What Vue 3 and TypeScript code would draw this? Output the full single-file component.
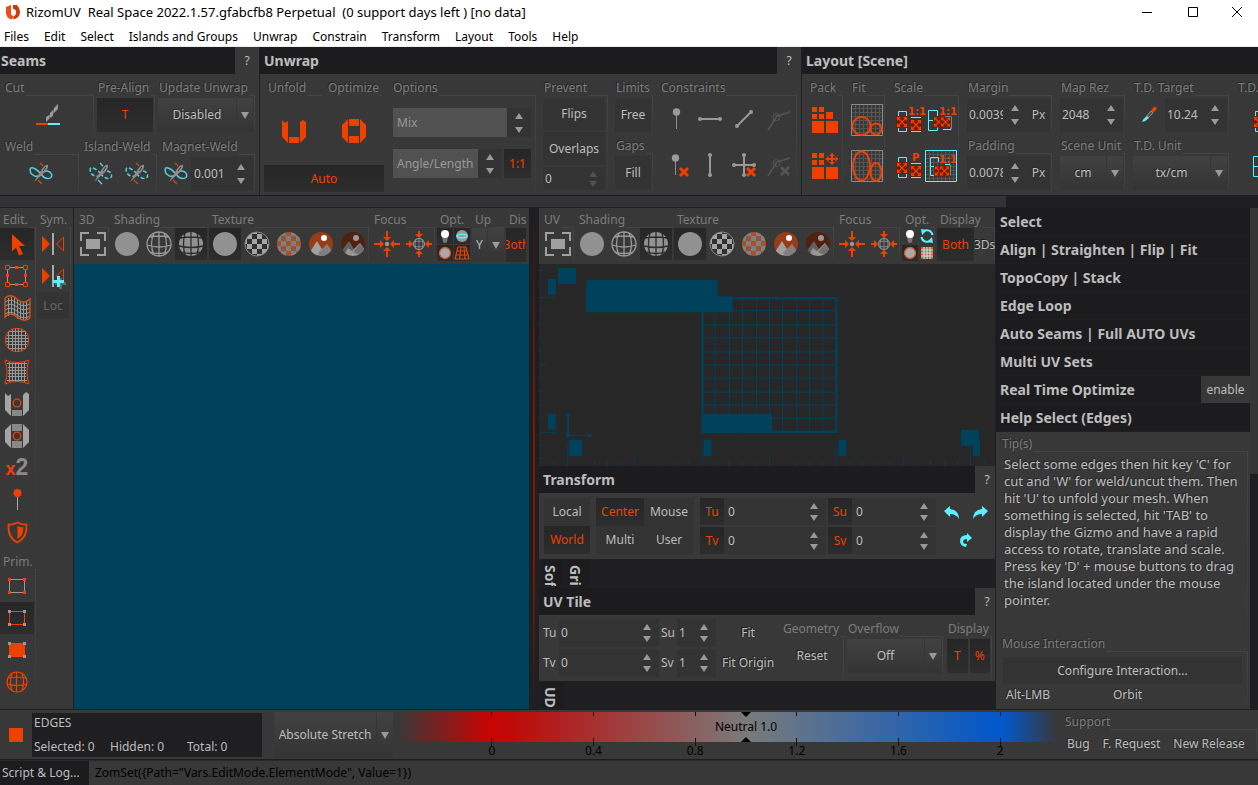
<script setup lang="ts">
import { ref } from 'vue'

interface Tool { icon: string; label: string; active?: boolean }

const menus = ['Files', 'Edit', 'Select', 'Islands and Groups', 'Unwrap', 'Constrain', 'Transform', 'Layout', 'Tools', 'Help']

const constraints: Tool[] = [
  { icon: 'pin', label: 'Pin' },
  { icon: 'horiz', label: 'Horizontal' },
  { icon: 'diag', label: 'Along line' },
  { icon: 'angle', label: 'Angle' },
  { icon: 'pin-x', label: 'Unpin' },
  { icon: 'vert', label: 'Vertical' },
  { icon: 'cross-x', label: 'Remove constraints' },
  { icon: 'angle-x', label: 'Remove angle' },
]

const editTools: Tool[] = [
  { icon: 'arrow', label: 'Select', active: true },
  { icon: 'box', label: 'Transform box' },
  { icon: 'flag', label: 'Deform' },
  { icon: 'bulge', label: 'Inflate' },
  { icon: 'pinch', label: 'Pinch' },
  { icon: 'brush-u', label: 'Unfold brush' },
  { icon: 'brush-o', label: 'Optimize brush' },
  { icon: 'x2', label: 'Double' },
  { icon: 'redpin', label: 'Pin brush' },
  { icon: 'shield', label: 'Protect' },
]

const primTools: Tool[] = [
  { icon: 'verts', label: 'Vertices' },
  { icon: 'edges', label: 'Edges', active: true },
  { icon: 'polys', label: 'Polygons' },
  { icon: 'isle', label: 'Islands' },
]

const shading: Tool[] = [
  { icon: 'ball', label: 'Flat' },
  { icon: 'wire', label: 'Wireframe' },
  { icon: 'wireball', label: 'Shaded wireframe', active: true },
]

const texture: Tool[] = [
  { icon: 'ball', label: 'No texture', active: true },
  { icon: 'checker', label: 'Checker' },
  { icon: 'checker2', label: 'Color checker' },
  { icon: 'photo', label: 'Image' },
  { icon: 'photo2', label: 'Dark image' },
]

const focus: Tool[] = [
  { icon: 'focus', label: 'Focus selection' },
  { icon: 'focus-globe', label: 'Focus all' },
]

const views = [
  {
    id: '3D',
    opts: [
      { icon: 'bulb', label: 'Light', active: true },
      { icon: 'ring', label: 'Ring', active: true },
      { icon: 'dot', label: 'Outline', active: true },
      { icon: 'floor', label: 'Floor', active: true },
    ] as Tool[],
  },
  {
    id: 'UV',
    opts: [
      { icon: 'bulb', label: 'Light' },
      { icon: 'sync', label: 'Sync' },
      { icon: 'dot', label: 'Outline', active: true },
      { icon: 'gridc', label: 'Grid' },
    ] as Tool[],
  },
]

const sections = ['Select', 'Align | Straighten | Flip | Fit', 'TopoCopy | Stack', 'Edge Loop', 'Auto Seams | Full AUTO UVs', 'Multi UV Sets']
const scale = ['0', '0.4', '0.8', '1.2', '1.6', '2']

const magnet = ref('0.001')
const mix = ref('Mix')
const angle = ref('Angle/Length')
const overlaps = ref('0')
const margin = ref('0.0039')
const padding = ref('0.0078')
const rez = ref('2048')
const target = ref('10.24')
const tu = ref('0')
const tv = ref('0')
const su = ref('0')
const sv = ref('0')
const tileTu = ref('0')
const tileTv = ref('0')
const tileSu = ref('1')
const tileSv = ref('1')

const step = 40.15 / 3
const gridPos = Array.from({ length: 11 }, (_, i) => Math.round(i * step))
const sideTicks = Array.from({ length: 15 }, (_, i) => ({ p: Math.round(7 + i * step), len: i % 10 === 2 ? 20 : i % 10 === 7 ? 10 : 5 }))
const baseTicks = Array.from({ length: 34 }, (_, i) => ({ p: Math.round(3 + i * step), len: i % 10 === 2 ? 20 : i % 10 === 7 ? 10 : 5 }))
</script>

<template>
  <svg class="defs" width="0" height="0" aria-hidden="true">
    <defs>
      <clipPath id="disc"><circle cx="16" cy="16" r="12" /></clipPath>
      <pattern id="chk" width="10" height="10" patternUnits="userSpaceOnUse" x="1" y="1">
        <rect width="10" height="10" fill="#303030" /><path d="M0 0h5v5h-5zM5 5h5v5h-5z" fill="#a4a4a4" />
      </pattern>
      <pattern id="chk2" width="10" height="10" patternUnits="userSpaceOnUse" x="3" y="3">
        <rect width="10" height="10" fill="#808080" /><path d="M0 0h5v5h-5z" fill="#a85028" /><path d="M5 5h5v5h-5z" fill="#94543a" />
      </pattern>
      <pattern id="mesh" width="4" height="4" patternUnits="userSpaceOnUse">
        <path d="M0 .5h4M.5 0v4" stroke="#555" stroke-width="1" />
      </pattern>
    </defs>
    <symbol id="i-logo" viewBox="0 0 16 16">
      <path d="M1 3l5-2v8q0 3 3 3l-2 3.500Q1 14 1 9z" fill="#f04a18" />
      <path d="M8 1h4q3 3 3 7 0 6-7 7.500l1-3.500q2-.5 2-4 0-3-3-3z" fill="#c83a10" />
    </symbol>
    <symbol id="i-cut" viewBox="0 0 24 22">
      <path d="M10 18v-5l3-2v4zM14 14V9l3-3v6zM18 9V4l4-4v5z" fill="#9a9a9a" />
      <path d="M13 15v-4l1-1v4zM17 10V6l1-1v4z" fill="#777" />
      <path d="M0 19h12v2H0z" fill="#f04000" /><path d="M12 19h12v2H12z" fill="#5cf0ff" />
    </symbol>
    <symbol id="i-weld" viewBox="0 0 24 24">
      <path d="M11 1l3 3M9 18l4 4" stroke="#d04010" stroke-width="1.500" />
      <path d="M12 12C8 7 2 4 1.200 7 .5 13 8 17 12 12 16 7 21 9 22.500 12 24 18 16 18 12 12" fill="none" stroke="#4fd0dc" stroke-width="1.500" />
      <path d="M5 20L13 7q4-5 6-4 1 3-4 8z" fill="#8c8c8c" /><path d="M14 9l3-4" stroke="#333" />
    </symbol>
    <symbol id="i-weld2" viewBox="0 0 24 24">
      <path d="M11 1l3 3M9 18l4 4" stroke="#4fd0dc" stroke-width="1.500" />
      <path d="M12 12C8 7 2 4 1.200 7 .5 13 8 17 12 12 16 7 21 9 22.500 12 24 18 16 18 12 12" fill="none" stroke="#4fd0dc" stroke-width="1.500" stroke-dasharray="4 2" />
      <path d="M5 20L13 7q4-5 6-4 1 3-4 8z" fill="#8c8c8c" /><path d="M14 9l3-4" stroke="#333" />
    </symbol>
    <symbol id="i-weld3" viewBox="0 0 24 24">
      <path d="M11 1l3 3M9 18l4 4" stroke="#d04010" stroke-width="1.500" />
      <path d="M12 12C8 7 2 4 1.200 7 .5 13 8 17 12 12 16 7 21 9 22.500 12 24 18 16 18 12 12" fill="none" stroke="#4fd0dc" stroke-width="1.500" stroke-dasharray="4 2" />
      <path d="M5 20L13 7q4-5 6-4 1 3-4 8z" fill="#8c8c8c" /><path d="M14 9l3-4" stroke="#333" />
    </symbol>
    <symbol id="i-u" viewBox="0 0 24 24">
      <path d="M0 1l3 3 3-2v22l-6-6zM7 18h10v6H7zM18 3l3-2 3 2v15l-6 6z" fill="currentColor" />
    </symbol>
    <symbol id="i-o" viewBox="0 0 24 24">
      <path d="M0 6l6-6v24l-6-6zM7 0h10v7H7zM7 17h10v7H7zM18 0l6 6v12l-6 6z" fill="currentColor" />
    </symbol>
    <symbol id="i-pin" viewBox="0 0 28 28"><path d="M13.500 8v16" stroke="#8f8f8f" /><circle cx="13.500" cy="7" r="3.700" fill="#9a9a9a" /></symbol>
    <symbol id="i-horiz" viewBox="0 0 28 28"><path d="M3 14h20" stroke="#999" stroke-width="2" /><circle cx="3" cy="14" r="2" fill="#999" /><circle cx="23" cy="14" r="2" fill="#999" /></symbol>
    <symbol id="i-diag" viewBox="0 0 28 28"><path d="M6 21L20 7" stroke="#999" stroke-width="2" /><circle cx="6" cy="21" r="2" fill="#999" /><circle cx="20" cy="7" r="2" fill="#999" /></symbol>
    <symbol id="i-angle" viewBox="0 0 28 28"><path d="M3 25l9-14 13-4" fill="none" stroke="#555" stroke-width="1.500" /><circle cx="11.500" cy="12" r="3.500" fill="none" stroke="#555" /></symbol>
    <symbol id="i-pin-x" viewBox="0 0 28 28"><path d="M12.500 8v16" stroke="#8f8f8f" /><circle cx="12.500" cy="7" r="3.700" fill="#9a9a9a" /><path d="M17 17l8 8M25 17l-8 8" stroke="#f04000" stroke-width="3" /></symbol>
    <symbol id="i-vert" viewBox="0 0 28 28"><path d="M13 4v20" stroke="#999" stroke-width="2" /><circle cx="13" cy="4" r="2" fill="#999" /><circle cx="13" cy="24" r="2" fill="#999" /></symbol>
    <symbol id="i-cross-x" viewBox="0 0 28 28"><path d="M13 4v20M3 14h20" stroke="#999" stroke-width="2" /><circle cx="13" cy="4" r="2" fill="#999" /><circle cx="13" cy="24" r="2" fill="#999" /><circle cx="3" cy="14" r="2" fill="#999" /><circle cx="23" cy="14" r="2" fill="#999" /><path d="M16 17l8 8M24 17l-8 8" stroke="#f04000" stroke-width="3" /></symbol>
    <symbol id="i-angle-x" viewBox="0 0 28 28"><path d="M3 25l9-14 13-4" fill="none" stroke="#555" stroke-width="1.500" /><circle cx="11.500" cy="12" r="3.500" fill="none" stroke="#555" /><path d="M16 16l8 8M24 16l-8 8" stroke="#555" stroke-width="2.500" /></symbol>
    <symbol id="i-pack" viewBox="0 0 26 26"><path d="M0 0h5v5H0zM7 0h5v5H7zM0 7h5v5H0zM7 7h5v5H7zM14 5h7v7h-7zM0 14h12v12H0zM14 14h12v12H14z" fill="#f04000" /></symbol>
    <symbol id="i-pack2" viewBox="0 0 26 26"><path d="M0 0h5v5H0zM7 0h5v5H7zM0 7h5v5H0zM7 7h5v5H7zM0 14h12v12H0zM14 14h12v12H14zM20 0l3 3h-6zM20 12l-3-3h6zM13.500 6l3-3v6zM26.500 6l-3-3v6zM19 2h2v8h-2zM16 5h8v2h-8z" fill="#f04000" /></symbol>
    <symbol id="i-fit" viewBox="0 0 32 32"><path d="M.5.5h31v31H.5z" fill="url(#mesh)" stroke="#8a8a8a" /><circle cx="10.500" cy="22" r="9" fill="none" stroke="#f04000" stroke-width="2" /><circle cx="25" cy="25" r="5.500" fill="none" stroke="#f04000" stroke-width="2" /></symbol>
    <symbol id="i-fit2" viewBox="0 0 32 32"><path d="M.5.5h31v31H.5z" fill="url(#mesh)" stroke="#8a8a8a" /><ellipse cx="10.500" cy="16" rx="8.500" ry="14.500" fill="none" stroke="#f04000" stroke-width="2" /><ellipse cx="25" cy="22" rx="5.500" ry="9" fill="none" stroke="#f04000" stroke-width="2" /></symbol>
    <symbol id="xa" viewBox="0 0 12 12"><path d="M0 0h12v12H0z" fill="#701c08" /><path d="M2 2l8 8M10 2l-8 8" stroke="#f04000" stroke-width="1.300" /><path d="M1 1h4L1 5zM11 1v4L7 1zM1 11V7l4 4zM11 11H7l4-4z" fill="#f04000" /></symbol>
    <symbol id="i-scale-a" viewBox="0 0 26 26"><path d="M2.500 9V4.500h8V9M2.500 20v4.500h8V20M15 10.500h10M15 24.500h10" fill="none" stroke="#5cf0ff" /><use href="#xa" x="0" y="9" width="12" height="12" /><use href="#xa" x="14" y="12" width="12" height="12" /></symbol>
    <symbol id="i-scale-b" viewBox="0 0 26 26"><path d="M9.500 9V3.500h-9v20h9V19M.5 13.500h5M17 9.500h6v13h-8M23 13.500h-3" fill="none" stroke="#5cf0ff" /><use href="#xa" x="5" y="9" width="11" height="12" /><use href="#xa" x="12" y="9" width="11" height="12" /></symbol>
    <symbol id="i-scale-c" viewBox="0 0 32 32"><path d="M.5.5h31v31H.5z" fill="url(#mesh)" stroke="#5cf0ff" /><path d="M13.500 12V7.500h-8v18h8V22M5.500 16.500h5M20 14.500h5v11h-5" fill="none" stroke="#5cf0ff" /><use href="#xa" x="9" y="15" width="11" height="12" /><use href="#xa" x="14" y="15" width="11" height="12" /></symbol>
    <symbol id="i-drop" viewBox="0 0 16 16"><path d="M2 14L10 5l2 2L4 15z" fill="#555" stroke="#999" stroke-width=".8" /><path d="M2 14l4-4 2 2-4 3-3 1z" fill="#5cf0ff" /><path d="M10 4l3-3q2-1 2.500 1 .5 1-1 2.500L12 7z" fill="#f04000" /></symbol>
    <symbol id="i-arrow" viewBox="0 0 32 32"><path d="M11 6l13 12h-6l4 8-4 1.500-3-8-4 4z" fill="#f04000" /></symbol>
    <symbol id="i-box" viewBox="0 0 32 32"><path d="M6.500 7.500h18v17h-18z" fill="none" stroke="#999" /><path d="M4.500 5.500h4v4h-4zM22.500 5.500h4v4h-4zM4.500 22.500h4v4h-4zM22.500 22.500h4v4h-4z" fill="#383838" stroke="#f04000" /><path d="M14 6h3v3h-3zM14 23h3v3h-3zM5 14h3v3H5zM23 14h3v3h-3z" fill="#f04000" /></symbol>
    <symbol id="i-flag" viewBox="0 0 32 32"><path d="M4 10q6-4 12 1t13 1M4 14q6-4 12 1t13 1M4 18q6-4 12 1t13 1M4 22q6-4 12 1t13 1M7.500 6v18M10.500 5v18M13.500 6v18M16.500 8v19M19.500 9v18M22.500 10v18M25.500 10v18" fill="none" stroke="#999" /><path d="M4 6q6-5 12 1t13 0v19q-6 5-13-1T4 25z" fill="none" stroke="#e05010" stroke-width="1.300" /></symbol>
    <symbol id="i-bulge" viewBox="0 0 32 32"><path d="M6 11.500h20M4 14.500h24M4 17.500h24M6 20.500h20M7 24.500h18M7 7.500h18M11.500 5v22M14.500 4v24M17.500 4v24M20.500 5v22M7.500 7v18M24.500 7v18" stroke="#999" /><rect x="4.500" y="4.500" width="23" height="23" rx="10" fill="none" stroke="#f04000" /></symbol>
    <symbol id="i-pinch" viewBox="0 0 32 32"><path d="M7 11.500h18M7 14.500h18M7 17.500h18M7 20.500h18M6 24.500h20M6 7.500h20M11.500 7v18M14.500 7v18M17.500 7v18M20.500 7v18M8.500 6v20M23.500 6v20" stroke="#999" /><path d="M4 4q12 5 24 0-4 12 0 24-12-5-24 0 4-12 0-24z" fill="none" stroke="#f04000" /></symbol>
    <symbol id="i-brush-u" viewBox="0 0 32 32"><path d="M4 5l3 3 3-2v22l-6-6zM22 7l3-3 3 2v16l-6 6z" fill="#a4a4a4" /><path d="M11 22h10v6H11z" fill="#888" /><circle cx="16" cy="15" r="3.800" fill="none" stroke="#f04000" stroke-width="1.300" /></symbol>
    <symbol id="i-brush-o" viewBox="0 0 32 32"><path d="M4 10l6-6v24l-6-6zM22 4l6 6v12l-6 6z" fill="#a4a4a4" /><path d="M11 4h10v7H11zM11 21h10v7H11z" fill="#888" /><circle cx="16" cy="16" r="3.800" fill="none" stroke="#f04000" stroke-width="1.300" /></symbol>
    <symbol id="i-redpin" viewBox="0 0 32 32"><path d="M16.500 10v16" stroke="#aaa" /><circle cx="16.500" cy="9" r="4" fill="#f04000" /></symbol>
    <symbol id="i-shield" viewBox="0 0 32 32"><path d="M16.500 6.500q5 2.500 9 2 1 13-9 18-10-5-9-18 4 .5 9-2z" fill="none" stroke="#f04000" stroke-width="1.800" /><path d="M16.500 10q3 1.500 6 1 0 9-6 12z" fill="#f04000" /></symbol>
    <symbol id="i-verts" viewBox="0 0 32 32"><path d="M8.500 9.500h15v13h-15z" fill="none" stroke="#999" /><path d="M7 8h3v3H7zM22 8h3v3h-3zM7 21h3v3H7zM22 21h3v3h-3z" fill="#f04000" /></symbol>
    <symbol id="i-edges" viewBox="0 0 32 32"><path d="M8.500 9.500h15v13h-15z" fill="none" stroke="#f04000" /><path d="M7 8h3v3H7zM22 8h3v3h-3zM7 21h3v3H7zM22 21h3v3h-3z" fill="#999" /></symbol>
    <symbol id="i-polys" viewBox="0 0 32 32"><path d="M8 9h16v14H8z" fill="#f04000" /><path d="M7 8h3v3H7zM22 8h3v3h-3zM7 21h3v3H7zM22 21h3v3h-3z" fill="#999" /></symbol>
    <symbol id="i-isle" viewBox="0 0 32 32"><g fill="none" stroke="#f04000" stroke-width="1.200"><circle cx="16" cy="16" r="10" /><path d="M15.500 6v20M11 7q-3 9 0 18M21 7q3 9 0 18M7 12q9-2 18 0M6 18q10 3 20 0" /></g></symbol>
    <symbol id="i-mirror" viewBox="0 0 32 32"><path d="M5 8l8 8-8 8z" fill="#f04000" /><path d="M26.500 9l-7 7 7 7z" fill="none" stroke="#f04000" /><path d="M15 5h2v22h-2z" fill="#aaa" /></symbol>
    <symbol id="i-mirror2" viewBox="0 0 32 32"><path d="M5 8l8 8-8 8z" fill="#f04000" /><path d="M26.500 9l-7 7 7 7z" fill="none" stroke="#f04000" /><path d="M15 5h2v22h-2z" fill="#aaa" /><path d="M22 18h3v4h4v3h-4v4h-3v-4h-4v-3h4z" fill="#666" /><path d="M20 16h3v4h4v3h-4v4h-3v-4h-4v-3h4z" fill="#5cf0ff" /></symbol>
    <symbol id="i-frame" viewBox="0 0 32 32"><path d="M4 13V5h8M20 5h8v8M28 19v8h-8M12 27H4v-8" fill="none" stroke="#a0a0a0" stroke-width="2" /><path d="M9 11h14v10H9z" fill="#a0a0a0" /></symbol>
    <symbol id="i-ball" viewBox="0 0 32 32"><circle cx="16" cy="16" r="12" fill="#919191" /></symbol>
    <symbol id="i-wire" viewBox="0 0 32 32"><g fill="none" stroke="#999" stroke-width="1.300"><circle cx="16" cy="16" r="12" /><path d="M16 4v24M11 5q-5 11 0 22M21 5q5 11 0 22M6 9q10-2 20 0M4 17q12 4 24 0M7 24q9 3 18 0" /></g></symbol>
    <symbol id="i-wireball" viewBox="0 0 32 32"><circle cx="16" cy="16" r="12" fill="#919191" /><path d="M16 4v24M10 5q-3 11 0 22M22 5q3 11 0 22M5 10q11-2 22 0M4 18q12 3 24 0M7 24q9 3 18 0" fill="none" stroke="#2c2c2c" stroke-width="1.300" /></symbol>
    <symbol id="i-checker" viewBox="0 0 32 32"><circle cx="16" cy="16" r="12" fill="url(#chk)" stroke="#888" /></symbol>
    <symbol id="i-checker2" viewBox="0 0 32 32"><circle cx="16" cy="16" r="12" fill="url(#chk2)" /></symbol>
    <symbol id="i-photo" viewBox="0 0 32 32"><g clip-path="url(#disc)"><path d="M0 0h32v32H0z" fill="#983c18" /><path d="M3 27L12 13l9 15z" fill="#a0a0a0" /><path d="M13 25l9-9 8 11-14 3z" fill="#808080" /><circle cx="19" cy="10" r="3" fill="#fff" /></g></symbol>
    <symbol id="i-photo2" viewBox="0 0 32 32"><g clip-path="url(#disc)"><path d="M0 0h32v32H0z" fill="#502010" /><path d="M3 25L12 13l9 15z" fill="#606060" /><path d="M6 29l5-9 4 3 8-8 8 11-14 5z" fill="#969696" /><path d="M16 24l7-8 8 10-8 1z" fill="#707070" /><circle cx="19" cy="10" r="3" fill="#999" /></g></symbol>
    <symbol id="i-focus" viewBox="0 0 32 32"><path d="M3 15h6v-3l4 4-4 4v-3H3zM29 15h-6v-3l-4 4 4 4v-3h6zM15 3v6h-3l4 4 4-4h-3V3zM15 29v-6h-3l4-4 4 4h-3v6z" fill="#f04000" /><circle cx="16" cy="16" r="2.200" fill="#999" /></symbol>
    <symbol id="i-focus-globe" viewBox="0 0 32 32"><path d="M3 15h3v-3l4 4-4 4v-3H3zM29 15h-3v-3l-4 4 4 4v-3h3zM15 3v3h-3l4 4 4-4h-3V3zM15 29v-3h-3l4-4 4 4h-3v3z" fill="#f04000" /><g fill="none" stroke="#999"><circle cx="16" cy="16" r="5.500" /><path d="M16 10v12M11 14q5-2 10 0M11 18q5 2 10 0M13 11q-2 5 0 10M19 11q2 5 0 10" stroke-width=".7" /></g></symbol>
    <symbol id="i-bulb" viewBox="0 0 16 16"><path d="M5 8h6l-1 6q-2 2-4 0z" fill="#777" /><circle cx="8" cy="6" r="4" fill="#fff" /></symbol>
    <symbol id="i-ring" viewBox="0 0 16 16"><circle cx="8" cy="8" r="6" fill="#999" /><ellipse cx="8" cy="8" rx="5" ry="1.800" fill="none" stroke="#5cf0ff" stroke-width="1.500" /></symbol>
    <symbol id="i-dot" viewBox="0 0 16 16"><circle cx="8" cy="8" r="5.500" fill="#aaa" stroke="#e05020" stroke-width="1.300" /></symbol>
    <symbol id="i-floor" viewBox="0 0 16 16"><path d="M4 2h8l3 12H1zM3 6h10M2 10h12M7 2L5.500 14M10 2l1 12" fill="none" stroke="#f04000" stroke-width="1.200" /></symbol>
    <symbol id="i-sync" viewBox="0 0 16 16"><path d="M2.500 9a5.500 5.500 0 0 0 9 3.500M13.500 7a5.500 5.500 0 0 0-9-3.500" fill="none" stroke="#5cf0ff" stroke-width="2" /><path d="M8 14l6 1-1-6zM8 2L2 1l1 6z" fill="#5cf0ff" /></symbol>
    <symbol id="i-gridc" viewBox="0 0 16 16"><path d="M2 2h12v12H2z" fill="#f05020" /><path d="M5 2v12M8 2v12M11 2v12M2 5h12M2 8h12M2 11h12" stroke="#8af4ff" stroke-width="1.200" /></symbol>
    <symbol id="i-undo" viewBox="0 0 16 16"><path d="M0 7l6-5v3q9 1 9 10-3-5-9-5v3z" fill="#5cf0ff" /></symbol>
    <symbol id="i-redo" viewBox="0 0 16 16"><path d="M16 7l-6-5v3q-9 1-9 10 3-5 9-5v3z" fill="#5cf0ff" /></symbol>
    <symbol id="i-redo2" viewBox="0 0 16 16"><path d="M14 6L9 1v2Q2 3 2 9q0 5 6 6l1-3Q5 12 5 9.500 5 7 9 7v3z" fill="#5cf0ff" /></symbol>
  </svg>

  <div class="app">
    <header class="title">
      <svg class="logo"><use href="#i-logo" /></svg>
      <span class="caption">RizomUV&nbsp; Real Space 2022.1.57.gfabcfb8 Perpetual&nbsp; (0 support days left ) [no data]</span>
      <button class="win" aria-label="Minimize"><svg viewBox="0 0 10 10"><path d="M0 5.500h10" /></svg></button>
      <button class="win" aria-label="Maximize"><svg viewBox="0 0 10 10"><path d="M.5.5h9v9h-9z" /></svg></button>
      <button class="win" aria-label="Close"><svg viewBox="0 0 10 10"><path d="M0 0l10 10M10 0L0 10" /></svg></button>
    </header>
    <nav class="menu"><button v-for="m in menus" :key="m">{{ m }}</button></nav>

    <section class="ribbon">
      <div class="panel">
        <div class="head"><h2>Seams</h2><button class="help">?</button></div>
        <div class="rows">
          <div class="seam-a">
            <div class="group"><div class="legend">Cut</div><button class="flat" aria-label="Cut"><svg class="s-cut"><use href="#i-cut" /></svg></button></div>
            <div class="group"><div class="legend">Pre-Align</div><button class="btn on fill">T</button></div>
            <div class="group"><div class="legend">Update Unwrap</div>
              <div class="combo fill"><select aria-label="Update Unwrap"><option>Disabled</option></select></div></div>
          </div>
          <div class="seam-b">
            <div class="group"><div class="legend">Weld</div><button class="flat" aria-label="Weld"><svg class="s24"><use href="#i-weld" /></svg></button></div>
            <div class="group"><div class="legend">Island-Weld</div>
              <div class="pair"><button class="flat" aria-label="Island weld"><svg class="s24"><use href="#i-weld2" /></svg></button><button class="flat" aria-label="Island weld and keep"><svg class="s24"><use href="#i-weld3" /></svg></button></div></div>
            <div class="group"><div class="legend">Magnet-Weld</div>
              <div class="pair magnet"><button class="flat" aria-label="Magnet weld"><svg class="s24"><use href="#i-weld" /></svg></button>
                <div class="num fill"><input v-model="magnet" aria-label="Magnet distance"><span class="spin"><button aria-label="Up" /><button aria-label="Down" /></span></div></div></div>
          </div>
        </div>
      </div>

      <div class="panel">
        <div class="head"><h2>Unwrap</h2><button class="help">?</button></div>
        <div class="cols unwrap">
          <div class="col">
            <div class="duo">
              <div><div class="legend in">Unfold</div><button class="flat big" aria-label="Unfold"><svg class="s24"><use href="#i-u" /></svg></button></div>
              <div><div class="legend in">Optimize</div><button class="flat big" aria-label="Optimize"><svg class="s24"><use href="#i-o" /></svg></button></div>
            </div>
            <button class="btn on auto">Auto</button>
          </div>
          <div class="group">
            <div class="legend">Options</div>
            <div class="num opt"><input v-model="mix" class="light" aria-label="Mix"><span class="spin"><button aria-label="Up" /><button aria-label="Down" /></span></div>
            <div class="optrow"><div class="num opt"><input v-model="angle" class="light" aria-label="Angle/Length"><span class="spin"><button aria-label="Up" /><button aria-label="Down" /></span></div><button class="btn on one">1:1</button></div>
          </div>
          <div class="group">
            <div class="legend">Prevent</div>
            <div class="prevent"><button class="btn">Flips</button><button class="btn">Overlaps</button>
              <div class="num dim"><input v-model="overlaps" aria-label="Overlap count"><span class="spin"><button aria-label="Up" /><button aria-label="Down" /></span></div></div>
          </div>
          <div class="col">
            <div class="group"><div class="legend">Limits</div><button class="btn fill">Free</button></div>
            <div class="group"><div class="legend">Gaps</div><button class="btn fill">Fill</button></div>
          </div>
          <div class="group">
            <div class="legend">Constraints</div>
            <div class="cons"><button v-for="c in constraints" :key="c.icon" class="flat" :aria-label="c.label"><svg class="s28"><use :href="'#i-' + c.icon" /></svg></button></div>
          </div>
        </div>
      </div>

      <div class="panel">
        <div class="head"><h2>Layout [Scene]</h2></div>
        <div class="cols layout">
          <div class="group"><div class="legend">Pack</div>
            <div class="stack"><button class="flat" aria-label="Pack"><svg class="s26"><use href="#i-pack" /></svg></button><button class="flat" aria-label="Pack and move"><svg class="s26"><use href="#i-pack2" /></svg></button></div></div>
          <div class="group"><div class="legend">Fit</div>
            <div class="stack"><button class="flat" aria-label="Fit"><svg class="s32"><use href="#i-fit" /></svg></button><button class="flat" aria-label="Stretch to fit"><svg class="s32"><use href="#i-fit2" /></svg></button></div></div>
          <div class="group"><div class="legend">Scale</div>
            <div class="stack two">
              <button class="flat"><svg class="s26"><use href="#i-scale-a" /><text x="12" y="8" class="svgt">1:1</text></svg></button>
              <button class="flat"><svg class="s26"><use href="#i-scale-b" /><text x="11" y="8" class="svgt">1:1</text></svg></button>
              <button class="flat"><svg class="s26"><use href="#i-scale-a" /><text x="16" y="8" class="svgt">P</text></svg></button>
              <button class="flat"><svg class="s32"><use href="#i-scale-c" /><text x="14" y="13" class="svgt">1:1</text></svg></button>
            </div></div>
          <div class="col">
            <div class="group"><div class="legend">Margin</div><div class="num fill"><input v-model="margin" aria-label="Margin"><span class="spin"><button aria-label="Up" /><button aria-label="Down" /></span><span class="unit">Px</span></div></div>
            <div class="group"><div class="legend">Padding</div><div class="num fill"><input v-model="padding" aria-label="Padding"><span class="spin"><button aria-label="Up" /><button aria-label="Down" /></span><span class="unit">Px</span></div></div>
          </div>
          <div class="col">
            <div class="group"><div class="legend">Map Rez</div><div class="num fill"><input v-model="rez" aria-label="Map resolution"><span class="spin"><button aria-label="Up" /><button aria-label="Down" /></span></div></div>
            <div class="group"><div class="legend">Scene Unit</div><div class="combo fill"><select aria-label="Scene Unit"><option>cm</option></select></div></div>
          </div>
          <div class="col">
            <div class="group"><div class="legend">T.D. Target</div><div class="pair td"><button class="flat" aria-label="Pick density"><svg class="s16"><use href="#i-drop" /></svg></button><div class="num fill"><input v-model="target" aria-label="Texel density"><span class="spin"><button aria-label="Up" /><button aria-label="Down" /></span></div></div></div>
            <div class="group"><div class="legend">T.D. Unit</div><div class="combo fill"><select aria-label="T.D. Unit"><option>tx/cm</option></select></div></div>
          </div>
          <div class="group"><div class="legend">T.D.</div>
            <div class="stack"><button class="flat" aria-label="Density scale"><svg class="s26"><use href="#i-scale-a" /></svg></button><button class="flat" aria-label="Density group scale"><svg class="s26"><use href="#i-scale-b" /></svg></button></div></div>
        </div>
      </div>
    </section>
    <div class="hbar"><span /></div>

    <main class="main">
      <aside class="tools">
        <div class="edit">
          <div class="group"><div class="legend">Edit.</div>
            <button v-for="t in editTools" :key="t.icon" class="cell" :class="{ act: t.active }" :aria-label="t.label">
              <span v-if="t.icon === 'x2'" class="x2"><i>x</i>2</span>
              <svg v-else class="s32"><use :href="'#i-' + t.icon" /></svg>
            </button></div>
          <div class="group"><div class="legend">Prim.</div>
            <button v-for="t in primTools" :key="t.icon" class="cell" :class="{ act: t.active }" :aria-label="t.label"><svg class="s32"><use :href="'#i-' + t.icon" /></svg></button></div>
        </div>
        <div class="group sym"><div class="legend">Sym.</div>
          <button class="cell" aria-label="Symmetry"><svg class="s32"><use href="#i-mirror" /></svg></button>
          <button class="cell" aria-label="Add symmetry"><svg class="s32"><use href="#i-mirror2" /></svg></button>
          <button class="btn loc" disabled>Loc</button></div>
      </aside>

      <template v-for="v in views" :key="v.id">
        <section class="view" :class="'v' + v.id">
          <div class="bar">
            <div class="group g-id"><div class="legend">{{ v.id }}</div><button class="cell" aria-label="Frame"><svg class="s32"><use href="#i-frame" /></svg></button></div>
            <div class="group g-open"><div class="legend">Shading</div><div class="pair"><button v-for="t in shading" :key="t.label" class="cell" :class="{ act: t.active }" :aria-label="t.label"><svg class="s32"><use :href="'#i-' + t.icon" /></svg></button></div></div>
            <div class="group"><div class="legend">Texture</div><div class="pair"><button v-for="t in texture" :key="t.label" class="cell" :class="{ act: t.active }" :aria-label="t.label"><svg class="s32"><use :href="'#i-' + t.icon" /></svg></button></div></div>
            <div class="group"><div class="legend">Focus</div><div class="pair"><button v-for="t in focus" :key="t.label" class="cell" :aria-label="t.label"><svg class="s32"><use :href="'#i-' + t.icon" /></svg></button></div></div>
            <div class="group"><div class="legend">Opt.</div><div class="quad"><button v-for="t in v.opts" :key="t.label" class="flat" :class="{ act: t.active }" :aria-label="t.label"><svg class="s16"><use :href="'#i-' + t.icon" /></svg></button></div></div>
            <template v-if="v.id === '3D'">
              <div class="group g-up"><div class="legend">Up</div><div class="combo fill"><select aria-label="Up axis"><option>Y</option></select></div></div>
              <div class="group g-dis"><div class="legend">Dis</div><button class="btn on fill"><span>Both</span></button></div>
            </template>
            <div v-else class="group g-disp"><div class="legend">Display</div><div class="pair"><button class="btn on">Both</button><button class="flat txt">3Ds</button></div></div>
          </div>
          <div v-if="v.id === '3D'" class="canvas3d" />
          <template v-else>
            <svg class="uv" viewBox="0 0 456 201" preserveAspectRatio="xMidYMid slice">
              <g fill="#083c54">
                <rect v-for="t in sideTicks" :key="'s' + t.p" x="0" :y="t.p - 1" :width="t.len" height="1" />
                <rect v-for="t in baseTicks" :key="'b' + t.p" :x="t.p - 1" :y="201 - t.len" width="1" :height="t.len" />
              </g>
              <g fill="#00415c">
                <rect v-for="p in gridPos" :key="'h' + p" x="163" :y="33 + p" width="135" height="1" />
                <rect v-for="p in gridPos" :key="'v' + p" :x="163 + p" y="33" width="1" height="135" />
                <path d="M163 33h135v135H163zM165 35v131h131V35z" fill-rule="evenodd" />
                <path d="M20 4h18v16H20zM10 15h8v16h-8zM48 16h131v16h15v16H48zM163 149h70v18h-70zM10 149h8v16h-8zM31 175h13v16H31zM165 175h8v16h-8zM299 175h8v16h-8zM421 165h18v10h1v16h-7v-10h-12z" />
                <path d="M29 150h2v20h-2zM30 147l3 4h-6zM30 170h21v1H30zM50 168l5 3-5 3zM30 168l3 3-3 3-3-3z" />
              </g>
            </svg>
            <div class="head sub"><h2>Transform</h2><button class="help">?</button></div>
            <div class="xform">
              <div class="bg1"><button class="btn">Local</button><button class="btn on">World</button></div>
              <div class="bg2"><button class="btn on">Center</button><button class="btn">Mouse</button><button class="btn">Multi</button><button class="btn">User</button></div>
              <div class="tnum">
                <button class="btn on">Tu</button><div class="num"><input v-model="tu" aria-label="Tu"><span class="spin"><button aria-label="Up" /><button aria-label="Down" /></span></div>
                <button class="btn on">Tv</button><div class="num"><input v-model="tv" aria-label="Tv"><span class="spin"><button aria-label="Up" /><button aria-label="Down" /></span></div>
              </div>
              <div class="tnum b">
                <button class="btn on">Su</button><div class="num"><input v-model="su" aria-label="Su"><span class="spin"><button aria-label="Up" /><button aria-label="Down" /></span></div>
                <button class="btn on">Sv</button><div class="num"><input v-model="sv" aria-label="Sv"><span class="spin"><button aria-label="Up" /><button aria-label="Down" /></span></div>
              </div>
              <div class="hist"><button class="flat" aria-label="Undo"><svg class="s16"><use href="#i-undo" /></svg></button><button class="flat" aria-label="Redo"><svg class="s16"><use href="#i-redo" /></svg></button><button class="flat wide" aria-label="Repeat"><svg class="s16"><use href="#i-redo2" /></svg></button></div>
            </div>
            <div class="tabs"><button>Soft</button><button>Grid</button></div>
            <div class="head sub"><h2>UV Tile</h2><button class="help">?</button></div>
            <div class="tile">
              <div class="lnum"><label for="ttu">Tu</label><div class="num"><input id="ttu" v-model="tileTu"><span class="spin"><button aria-label="Up" /><button aria-label="Down" /></span></div>
                <label for="ttv">Tv</label><div class="num"><input id="ttv" v-model="tileTv"><span class="spin"><button aria-label="Up" /><button aria-label="Down" /></span></div></div>
              <div class="lnum"><label for="tsu">Su</label><div class="num"><input id="tsu" v-model="tileSu"><span class="spin"><button aria-label="Up" /><button aria-label="Down" /></span></div>
                <label for="tsv">Sv</label><div class="num"><input id="tsv" v-model="tileSv"><span class="spin"><button aria-label="Up" /><button aria-label="Down" /></span></div></div>
              <div class="fits"><button class="flat txt">Fit</button><button class="flat txt">Fit Origin</button></div>
              <div class="group g-geo"><div class="legend">Geometry</div><button class="flat txt fill">Reset</button></div>
              <div class="group g-over"><div class="legend">Overflow</div><div class="combo fill"><select aria-label="Overflow"><option>Off</option></select></div></div>
              <div class="group g-show"><div class="legend">Display</div><div class="pair gap"><button class="btn on fill">T</button><button class="btn on fill">%</button></div></div>
            </div>
            <div class="tabs"><button>UDIM</button></div>
          </template>
        </section>
        <div v-if="v.id === '3D'" class="split"><span /></div>
      </template>

      <aside class="side">
        <h3 v-for="s in sections" :key="s"><button>{{ s }}</button></h3>
        <h3><button>Real Time Optimize</button><button class="enable">enable</button></h3>
        <h3><button>Help Select (Edges)</button></h3>
        <div class="sidebody">
          <div class="group tips"><div class="legend">Tip(s)</div>
            <p>Select some edges then hit key 'C' for<br>cut and 'W' for weld/uncut them. Then<br>hit 'U' to unfold your mesh. When<br>something is selected, hit 'TAB' to<br>display the Gizmo and have a rapid<br>access to rotate, translate and scale.<br>Press key 'D' + mouse buttons to drag<br>the island located under the mouse<br>pointer.</p></div>
          <div class="group mouse"><div class="legend">Mouse Interaction</div><button class="btn">Configure Interaction...</button>
            <div class="keys"><span>Alt-LMB</span><span>Orbit</span></div></div>
        </div>
      </aside>
      <div class="vbar"><span /></div>
    </main>

    <section class="status">
      <span class="swatch" />
      <div class="info"><div>EDGES</div><div class="counts"><span>Selected: 0</span><span>Hidden: 0</span><span>Total: 0</span></div></div>
      <div class="combo dist"><select aria-label="Distortion"><option>Absolute Stretch</option></select></div>
      <div class="ramp">
        <div class="ticks"><div v-for="s in scale" :key="s" class="tick"><span class="mark" /><span>{{ s }}</span></div></div>
        <div class="neutral">Neutral 1.0</div>
      </div>
      <div class="group support"><div class="legend">Support</div><div class="links"><a href="#bug">Bug</a><a href="#request">F. Request</a><a href="#release">New Release</a></div></div>
    </section>
    <footer class="script"><button>Script &amp; Log...</button><output>ZomSet({Path="Vars.EditMode.ElementMode", Value=1})</output></footer>
  </div>
</template>

<style>
body { margin: 0; background: #383838; }
</style>

<style scoped>
.defs { position: absolute; }
.app {
  --o: #f04000; --p: #383838; --d: #1c1c1e; --g: #1f1f21; --t: #bdbdbd;
  display: flex; flex-direction: column; min-height: 100vh; overflow: hidden;
  font: 12px/16px "Noto Sans", "Open Sans", sans-serif; color: var(--t); background: var(--p);
}
button, input, select { font: inherit; color: inherit; border: 0; padding: 0; margin: 0; background: none; border-radius: 0; min-width: 0; }
svg { display: block; flex: none; }
.svgt { font: bold 10px "DejaVu Sans", sans-serif; fill: #f04000; text-shadow: none; }
.s16 { width: 16px; height: 16px; }
.s24 { width: 24px; height: 24px; }
.s26 { width: 26px; height: 26px; overflow: visible; }
.s28 { width: 28px; height: 28px; }
.s32 { width: 32px; height: 32px; overflow: visible; }
.s-cut { width: 24px; height: 22px; }

.title { display: flex; align-items: center; height: 24px; background: #fff; color: #000; padding-left: 5px; }
.logo { width: 16px; height: 16px; margin-right: 5px; }
.caption { flex: 1; font-size: 13px; }
.win { width: 46px; height: 24px; display: grid; place-items: center; }
.win:last-child { width: 42px; }
.win svg { width: 10px; height: 10px; fill: none; stroke: #000; stroke-width: 1; }
.menu { display: flex; gap: 15px; height: 23px; padding: 3px 0 0 4px; background: #fff; color: #000; box-sizing: border-box; border-bottom: 1px solid #eee; }

.ribbon { display: grid; grid-template-columns: 260px 542px minmax(0, 1fr); overflow: hidden; border-bottom: 1px solid #1d1d1f; text-shadow: -1px -1px #262626; }
.panel { border-right: 1px solid var(--g); min-width: 0; overflow: hidden; }
.panel:last-child { border-right: 0; }
.head { display: flex; height: 27px; background: var(--p); }
.head h2 { flex: 1; margin: 0; padding-left: 1px; background: var(--d); font-size: 14px; line-height: 27px; font-weight: 700; }
.panel + .panel h2 { padding-left: 4px; }
.help { width: 24px; }
.legend { display: flex; flex: none; height: 22px; box-sizing: border-box; padding: 6px 0 0 1px; line-height: 16px; color: #7c7c7c; white-space: nowrap; }
.legend::after { content: ""; flex: 1; margin-left: 1px; border-bottom: 1px solid #444; }
.legend.in { padding-left: 4px; }
.group { display: flex; flex-direction: column; min-width: 0; box-sizing: border-box; padding-right: 2px; background: linear-gradient(#454545, #383838) no-repeat right 0 top 22px / 1px 100%; }
.group > .legend { margin-right: -2px; }
.flat { display: grid; place-items: center; flex: 1; }
.btn { background: #333; display: grid; place-items: center; }
.btn.on, .act { background: linear-gradient(#262626, #2d2d2d); }
.btn.on { color: var(--o); }
.txt { text-shadow: -1px -1px #1c1c1c; }
.fill { height: 34px; margin-top: 2px; flex: none; }
.pair { display: flex; }
.pair .fill { flex: 1; }
.col { display: flex; flex-direction: column; min-width: 0; }
.col > .group { height: 59px; margin-bottom: -1px; }
.combo { display: grid; grid-template-columns: 1fr 17px; align-items: center; background: linear-gradient(#414141, #343434); }
.combo select { grid-area: 1 / 1 / 2 / 3; appearance: none; height: 100%; width: 100%; padding-right: 17px; text-align: center; text-align-last: center; text-shadow: inherit; }
.combo::after { content: ""; grid-area: 1 / 2; justify-self: center; border: 4px solid transparent; border-top: 7px solid #999; border-bottom: 0; pointer-events: none; }
.combo::before { content: ""; grid-area: 1 / 2; align-self: stretch; width: 1px; background: #363636; pointer-events: none; }
.num { display: flex; background: #333; min-width: 0; }
.num input { flex: 1; width: 0; padding-left: 2px; }
.num .light { background: #515151; color: #999; padding-left: 4px; text-shadow: none; }
.spin { width: 24px; display: flex; flex-direction: column; justify-content: center; align-items: center; gap: 8px; flex: none; }
.spin button { border: 4px solid transparent; width: 0; height: 0; }
.spin button:first-child { border-bottom: 6px solid #999; border-top: 0; }
.spin button:last-child { border-top: 6px solid #999; border-bottom: 0; }
.dim .spin button:first-child { border-bottom-color: #505050; }
.dim .spin button:last-child { border-top-color: #505050; }
.unit { width: 23px; align-self: center; text-align: center; }

.rows { height: 121px; padding-left: 4px; }
.seam-a { display: grid; grid-template-columns: 90px 58px 97px; gap: 3px; height: 59px; }
.seam-b { display: grid; grid-template-columns: 75px 74px 94px; gap: 4px; height: 59px; }
.seam-b .pair { flex: 1; }
.seam-b .magnet .flat { flex: 0 0 30px; }
.seam-b .num input { padding-left: 3px; }
.cols { display: grid; height: 121px; box-sizing: border-box; }
.cols > * { margin-bottom: 5px; }
.unwrap { grid-template-columns: 121px 144px 65px 38px 137px; gap: 7px; padding-left: 4px; }
.layout { grid-template-columns: 34px 34px 66px 85px 65px 96px 60px; gap: 8px; padding-left: 7px; }
.duo { display: grid; grid-template-columns: 60px 60px; height: 91px; }
.duo .legend { margin-right: 2px; }
.big { width: 100%; height: 69px; color: var(--o); }
.auto { height: 27px; margin-right: 1px; }
.opt { height: 29px; margin: 12px 3px 0 1px; }
.optrow { display: flex; }
.optrow .opt { flex: 1; margin-right: 2px; }
.one { width: 27px; height: 29px; margin: 12px 3px 0 0; }
.prevent { display: grid; grid-template-rows: 32px 33px 23px; gap: 2px; margin-top: 2px; padding-right: 1px; }
.prevent .spin { gap: 4px; }
.cons { display: grid; grid-template-columns: repeat(4, 34px); grid-template-rows: 46px 46px; }
.stack { display: grid; grid-template-rows: 46px 46px; justify-items: center; align-items: center; padding-top: 1px; }
.two { grid-template-columns: 32px 32px; }
.td .flat { flex: 0 0 32px; }

.hbar { height: 12px; box-sizing: border-box; border-bottom: 1px solid var(--g); background: var(--g); display: flex; }
.hbar span { width: 80%; background: #333335; }

.main { flex: 1; display: grid; grid-template-columns: 73px minmax(0, 1fr) 10px minmax(0, 1fr) 255px 8px; min-height: 0; border-bottom: 1px solid var(--g); }
.main .legend { height: 20px; padding-top: 4px; }
.main .group { background-position: right 0 top 20px; }
.tools { display: flex; }
.edit { width: 36px; }
.edit .group { width: 36px; margin-bottom: 2px; padding-right: 1px; }
.edit .legend { padding-left: 3px; }
.cell { width: 32px; height: 32px; display: grid; place-items: center; flex: none; }
.edit .cell { width: 34px; }
.tools .sym { width: 34px; margin-left: 1px; align-self: flex-start; }
.sym .legend { padding-left: 3px; }
.loc { height: 27px; color: #666; }
.x2 { font: bold 23px/28px "Liberation Sans", sans-serif; color: #8a8a8a; }
.x2 i { font-style: normal; font-size: 18px; color: var(--o); }
.view { display: flex; flex-direction: column; min-width: 0; border-left: 1px solid var(--g); }
.vUV { border-left: 0; background: var(--g); }
.bar { display: flex; height: 56px; overflow: hidden; padding-left: 2px; background: var(--p); flex: none; }
.bar .legend { padding-left: 3px; }
.bar .group { flex: none; padding-right: 0; margin-right: 2px; height: 52px; }
.bar .group > .legend { margin-right: 0; }
.bar .g-open { background: none; }
.g-id { width: 33px; }
.g-id .cell { width: 34px; }
.quad { display: grid; grid-template: 16px 16px / 16px 16px; gap: 1px; }
.g-up { width: 32px; }
.bar .fill { margin-top: 0; }
.bar .g-dis { width: 20px; }
.g-dis .btn { overflow: hidden; justify-content: center; }
.g-disp .btn { width: 37px; height: 33px; }
.canvas3d { flex: 1; background: #00415c; }
.uv { flex: 1 1 201px; width: 100%; min-height: 0; background: #272727; }
.split { background: var(--g); padding-left: 4px; }
.split span { display: block; width: 2px; height: 100%; background: linear-gradient(#1f1f21, #7a1a04 45%, #7a1a04 70%, #1f1f21); }
.sub { flex: none; }
.sub h2 { padding-left: 4px; }
.sub .help { width: 20px; padding-left: 4px; }
.xform { display: flex; flex: none; height: 66px; box-sizing: border-box; padding: 5px; background: var(--p); }
.bg1 { display: grid; grid-template: 28px 28px / 46px; margin-right: 6px; }
.bg2 { display: grid; grid-template: 28px 28px / 48px 50px; margin-right: 6px; }
.tnum { display: grid; grid-template: 27px 27px / 24px 102px; gap: 2px 0; margin-right: 2px; }
.tnum.b { grid-template-columns: 24px 84px; }
.tnum .num input { padding-left: 4px; }
.tnum .spin, .lnum .spin { gap: 6px; }
.hist { flex: 1; display: grid; grid-template: 28px 28px / 28px 28px; }
.wide { grid-column: 1 / 3; }
.tabs { display: flex; gap: 2px; height: 28px; flex: none; padding: 1px 0 1px 2px; margin-bottom: 1px; box-sizing: border-box; }
.tabs:last-child { margin-bottom: 0; }
.tabs button { width: 23px; overflow: hidden; writing-mode: vertical-rl; text-align: left; background: var(--d); font-weight: 700; font-size: 14px; padding: 5px 5px 0 0; line-height: 18px; }
.tile { display: flex; flex: none; height: 66px; padding: 4px 3px 0 4px; box-sizing: border-box; background: var(--p); gap: 2px; }
.lnum { display: grid; grid-template: 28px 28px / 16px 100px; gap: 2px 0; align-items: center; }
.lnum + .lnum { grid-template-columns: 16px 39px; }
.lnum .num { height: 28px; }
.fits { width: 60px; display: grid; grid-template-rows: 28px 28px; gap: 2px; white-space: nowrap; }
.tile .group { margin-top: -2px; }
.tile .g-geo { width: 62px; margin-left: 2px; }
.tile .g-over { flex: 1; margin-left: 1px; }
.tile .g-show { width: 45px; margin-left: 2px; }
.gap { gap: 2px; }

.side { display: flex; flex-direction: column; background: var(--p); border-left: 1px solid var(--g); }
.side h3 { display: flex; justify-content: space-between; height: 27px; margin: 0 0 1px; background: var(--d); box-shadow: 0 1px var(--g); font-size: 14px; line-height: 27px; font-weight: 700; }
.side h3 button { padding-left: 4px; }
.side h3 .enable { width: 49px; padding: 0; background: var(--p); font-size: 12px; font-weight: 400; }
.sidebody { padding: 0 2px 0 5px; text-shadow: -1px -1px #262626; }
.tips { height: 200px; }
.tips p { margin: 4px 0 0 3px; font-size: 13px; line-height: 17px; white-space: nowrap; }
.mouse .btn { margin: 5px 4px 0 2px; height: 27px; }
.keys { display: grid; grid-template-columns: 107px 1fr; padding: 3px 0 0 5px; }
.vbar { background: var(--g); }
.vbar span { display: block; height: 53%; background: #353535; }

.status { display: flex; height: 50px; box-sizing: border-box; border-bottom: 1px solid #1d1d1f; align-items: flex-start; }
.swatch { width: 14px; height: 14px; margin: 18px 9px 0; background: var(--o); }
.info { width: 230px; height: 44px; margin: 3px 12px 0 0; box-sizing: border-box; padding: 2px; background: var(--g); display: flex; flex-direction: column; justify-content: space-between; }
.counts { display: grid; grid-template-columns: 76px 77px 1fr; }
.dist { width: 119px; height: 46px; margin-top: 2px; }
.ramp { flex: 1; display: grid; margin: 2px 8px 0 4px; padding: 0 6px 0 44px; color: #000; background: linear-gradient(90deg, transparent, #c80404 14%, #c00808 17%, #7a7a7a 53%, #0458c8 90%, #0458c8 92%, transparent) no-repeat top / 100% 30px; }
.ticks { grid-area: 1 / 1; display: grid; grid-template-columns: repeat(6, 1fr); }
.tick { display: grid; grid-template-rows: 31px 16px; justify-items: center; }
.mark { width: 1px; height: 34px; background: linear-gradient(#111 4px, transparent 4px, transparent 26px, #111 26px); }
.neutral { grid-area: 1 / 1; height: 30px; display: grid; justify-items: center; align-content: space-between; line-height: 20px; }
.neutral::before, .neutral::after { content: ""; border: 5px solid transparent; border-top: 5px solid #000; border-bottom: 0; }
.neutral::after { border-top: 0; border-bottom: 5px solid #000; }
.support { width: 192px; margin-right: 1px; height: 42px; text-shadow: -1px -1px #262626; }
.support .legend { height: 20px; padding-top: 4px; padding-left: 0; }
.support.group { background-position: right 0 top 20px; }
.links { display: flex; gap: 13px; padding: 6px 0 0 2px; white-space: nowrap; }
.links a { color: inherit; text-decoration: none; }
.script { display: flex; height: 24px; border-top: 1px solid #2a2a2a; line-height: 24px; color: #000; }
.script button { width: 89px; padding-left: 2px; text-align: left; background: var(--d); color: var(--t); }
.script output { padding-left: 6px; }
</style>
